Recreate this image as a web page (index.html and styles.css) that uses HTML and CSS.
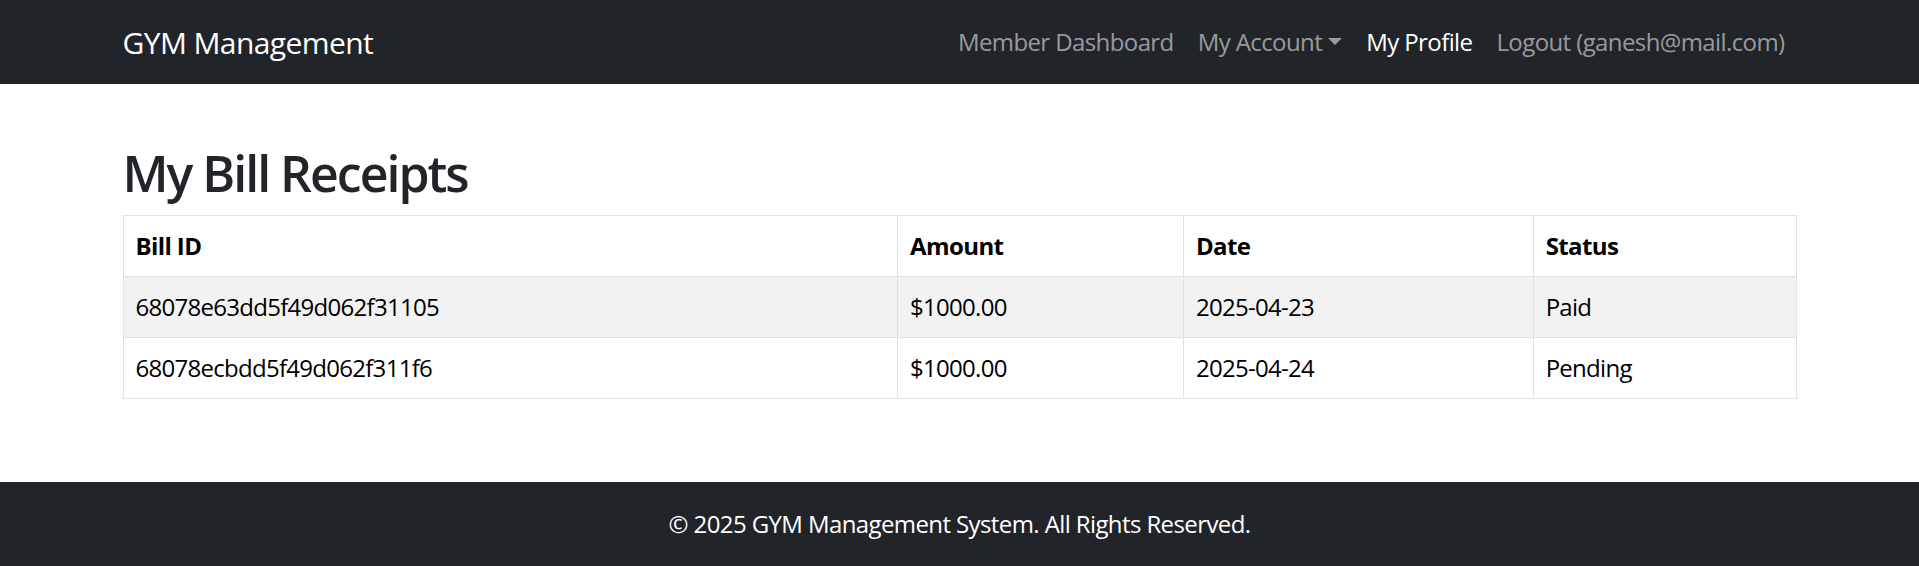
FILE: index.html
```html
<!DOCTYPE html>
<html lang="en">
<head>
<meta charset="utf-8">
<title>My Bill Receipts</title>
<link rel="stylesheet" href="styles.css">
</head>
<body>
<nav class="navbar">
  <div class="container nav-inner">
    <a class="brand" href="#">GYM Management</a>
    <ul class="nav-list">
      <li><a class="nav-link" href="#">Member Dashboard</a></li>
      <li><a class="nav-link dropdown-toggle" href="#">My Account</a></li>
      <li><a class="nav-link active" href="#">My Profile</a></li>
      <li><a class="nav-link" href="#">Logout (ganesh@mail.com)</a></li>
    </ul>
  </div>
</nav>
<main class="container main">
  <h1 class="title">My Bill Receipts</h1>
  <table class="bills">
    <colgroup>
      <col class="col-id">
      <col class="col-amount">
      <col class="col-date">
      <col class="col-status">
    </colgroup>
    <thead>
      <tr><th>Bill ID</th><th>Amount</th><th>Date</th><th>Status</th></tr>
    </thead>
    <tbody>
      <tr><td>68078e63dd5f49d062f31105</td><td>$1000.00</td><td>2025-04-23</td><td>Paid</td></tr>
      <tr><td>68078ecbdd5f49d062f311f6</td><td>$1000.00</td><td>2025-04-24</td><td>Pending</td></tr>
    </tbody>
  </table>
</main>
<footer class="footer">© 2025 GYM Management System. All Rights Reserved.</footer>
</body>
</html>
```

FILE: styles.css
```css
* { box-sizing: border-box; }
html, body { margin: 0; padding: 0; }
body {
  font-family: "Segoe UI", "Open Sans", "Noto Sans", sans-serif;
  font-size: 24px;
  line-height: 1.5;
  letter-spacing: -0.025em;
  color: #212529;
  background: #fff;
  min-height: 100vh;
  display: flex;
  flex-direction: column;
}
.container {
  width: 100%;
  max-width: 1710px;
  margin: 0 auto;
  padding: 0 18px;
}
.navbar {
  background: #212529;
  padding: 12px 0;
}
.nav-inner {
  display: flex;
  align-items: center;
}
.brand {
  font-size: 30px;
  line-height: 45px;
  padding: 7.5px 0;
  margin-right: 24px;
  color: #fff;
  text-decoration: none;
}
.nav-list {
  display: flex;
  list-style: none;
  margin: 0 0 0 auto;
  padding: 0;
}
.nav-link {
  display: block;
  padding: 12px;
  color: rgba(255, 255, 255, 0.55);
  text-decoration: none;
  line-height: 36px;
}
.nav-link.active { color: #fff; }
.dropdown-toggle::after {
  content: "";
  display: inline-block;
  margin-left: 0.255em;
  vertical-align: 0.255em;
  border-top: 0.3em solid;
  border-right: 0.3em solid transparent;
  border-left: 0.3em solid transparent;
  border-bottom: 0;
}
.main {
  padding-top: 59px;
}
.title {
  font-size: 50px;
  font-weight: 600;
  line-height: 1.2;
  letter-spacing: -0.04em;
  margin: 0 0 12px;
}
.bills {
  width: 100%;
  border-collapse: collapse;
  margin-bottom: 24px;
  color: #000;
}
.col-id { width: 775px; }
.col-amount { width: 286px; }
.col-date { width: 350px; }
.col-status { width: 263px; }
.bills th, .bills td {
  padding: 12px;
  border: 1px solid #dee2e6;
  text-align: left;
  vertical-align: top;
}
.bills th { font-weight: 700; }
.bills td { letter-spacing: -0.03em; }
.bills tbody tr:nth-child(odd) td { background: #f2f2f2; }
.footer {
  margin-top: auto;
  background: #212529;
  color: #fff;
  text-align: center;
  padding: 24px 0;
}
```
